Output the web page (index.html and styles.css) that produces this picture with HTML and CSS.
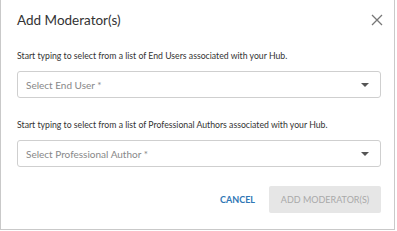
FILE: index.html
```html
<!DOCTYPE html>
<html>
<head>
<meta charset="utf-8">
<link rel="stylesheet" href="styles.css">
</head>
<body>
<div class="dialog">
  <div class="header">
    <h1 class="title">Add Moderator(s)</h1>
    <button class="close" aria-label="Close">
      <svg width="12" height="12" viewBox="0 0 12 12"><path d="M1 1 L11 11 M11 1 L1 11" stroke="#777" stroke-width="1.3" fill="none"/></svg>
    </button>
  </div>
  <div class="body">
    <p class="hint">Start typing to select from a list of End Users associated with your Hub.</p>
    <div class="select"><span class="placeholder">Select End User *</span><span class="arrow"></span></div>
    <p class="hint second">Start typing to select from a list of Professional Authors associated with your Hub.</p>
    <div class="select"><span class="placeholder">Select Professional Author *</span><span class="arrow"></span></div>
  </div>
  <div class="actions">
    <button class="btn cancel">CANCEL</button>
    <button class="btn add" disabled>ADD MODERATOR(S)</button>
  </div>
</div>
</body>
</html>
```
FILE: styles.css
```css
html, body { margin: 0; padding: 0; background: #fff; }
body { font-family: "Lato", "Open Sans", sans-serif; color: #333; }
.dialog {
  width: 393px;
  height: 229px;
  border-left: 1px solid #c9c9c9;
  border-right: 1px solid #c9c9c9;
  border-bottom: 1px solid #c9c9c9;
  background: #fff;
  display: flex;
  flex-direction: column;
}
.header {
  display: flex;
  justify-content: space-between;
  align-items: center;
  padding: 9px 11px 0 16px;
  height: 22px;
}
.title { margin: 0; font-size: 13.5px; font-weight: 400; color: #333; }
.close { border: 0; background: none; padding: 0; width: 12px; height: 12px; display: flex; }
.body { padding: 19px 13px 0 16px; }
.hint { margin: 0; font-size: 8.7px; color: #333; height: 12px; line-height: 12px; }
.hint.second { margin-top: 21px; }
.select {
  margin-top: 9px;
  height: 25px;
  border: 1px solid #cfcfcf;
  border-radius: 3px;
  display: flex;
  align-items: center;
  justify-content: space-between;
  padding: 0 11px 0 8px;
}
.placeholder { font-size: 10px; color: #888; }
.arrow { width: 0; height: 0; border-left: 4px solid transparent; border-right: 4px solid transparent; border-top: 4px solid #555; }
.actions {
  margin-top: auto;
  display: flex;
  justify-content: flex-end;
  align-items: center;
  gap: 8px;
  padding: 0 13px 16px 0;
}
.btn { font-family: inherit; border: 0; font-size: 9px; white-space: nowrap; cursor: pointer; }
.cancel { background: none; color: #2f77b5; font-weight: 700; padding: 0 6px; height: 27px; }
.add { background: #e6e6e6; color: #a9a9a9; height: 27px; padding: 0; width: 112px; border-radius: 2px; }
```
